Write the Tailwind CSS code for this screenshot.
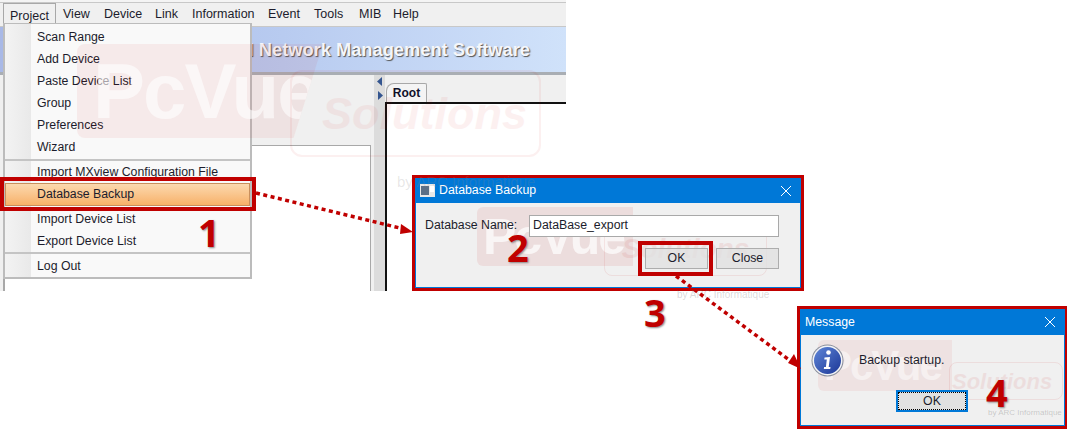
<!DOCTYPE html>
<html lang="en">
<head>
    <meta charset="UTF-8">
    <title>Database Backup</title>
    <script src="https://cdn.jsdelivr.net/npm/@tailwindcss/browser@4"></script>
</head>
<body class="bg-white">
<div class="relative w-[1067px] h-[446px] overflow-hidden bg-white font-['Liberation_Sans',sans-serif] text-[12.3px] text-[#1c1c2c]">

    <!-- application window -->
    <div class="absolute left-0 top-0 w-[566px] h-[291px] flex flex-col bg-[#f0f0f0]">
        <div class="h-[3px] bg-[#f4f4f4] border-b border-[#c8c8c8]"></div>
        <div class="h-[24px] flex items-center border-b border-[#c8c8c8] pl-[10px] text-[12.5px]">
            <span class="w-[53px]">Project</span>
            <span class="w-[41px]">View</span>
            <span class="w-[51px]">Device</span>
            <span class="w-[37px]">Link</span>
            <span class="w-[76px]">Information</span>
            <span class="w-[46px]">Event</span>
            <span class="w-[45px]">Tools</span>
            <span class="w-[34px]">MIB</span>
            <span>Help</span>
        </div>
        <div class="h-[45px] flex items-center justify-end pr-[36px] bg-gradient-to-r from-[#a8b8e6] via-[#b8cbf0] to-[#d0e2fa] text-[18.300px] font-bold text-[#f4f6fb] [text-shadow:1px_1px_1px_#555]">Industrial Network Management Software</div>
        <div class="flex-1 flex border-t-[3px] border-[#a9aeb4] bg-white">
            <div class="w-[374px] pt-[70px] pl-[3px] bg-[#f0f0f0]">
                <div class="h-full w-[368px] bg-white border-l-2 border-t border-r border-[#a8a8a8]"></div>
            </div>
            <div class="w-[11px] flex flex-col items-center gap-[5px] pt-[2px] bg-[#dcdcdc]">
                <svg width="6" height="9" viewBox="0 0 6 9"><path d="M5 0v9L0 4.500z" fill="#34558f"/></svg>
                <svg width="6" height="9" viewBox="0 0 6 9"><path d="M1 0v9l5-4.500z" fill="#34558f"/></svg>
            </div>
            <div class="flex-1 flex flex-col bg-[#f0f0f0]">
                <div class="h-[27px] flex items-end pl-[1px]">
                    <div class="w-[41px] h-[19px] flex items-center justify-center bg-[#f4f4f4] border border-b-0 border-[#a8a8a8] rounded-tl-[8px] rounded-tr-[2px] font-bold text-[12px] text-[#10102a]">Root</div>
                </div>
                <div class="flex-1 bg-white border-l-2 border-t-2 border-[#111]"></div>
            </div>
        </div>
    </div>

    <!-- project menu -->
    <div class="absolute left-[3px] top-[3px] w-[53px] h-[21px] border border-b-0 border-[#a8a8a8] bg-[#f0f0f0]"></div>
    <div class="absolute left-[10px] top-[7px] text-[12.5px]">Project</div>
    <div class="absolute left-[3px] top-[23px] w-[249px] h-[256px] flex flex-col bg-[#f9f9f9] border-2 border-t-1 border-[#bcbcbc]">
        <div class="absolute left-0 top-0 bottom-0 w-[26px] bg-gradient-to-r from-[#f3f3f3] to-[#e9e9e9]"></div>
        <div class="relative flex flex-col pt-[2px]">
            <div class="h-[22px] flex items-center pl-[32px]">Scan Range</div>
            <div class="h-[22px] flex items-center pl-[32px]">Add Device</div>
            <div class="h-[22px] flex items-center pl-[32px]">Paste Device List</div>
            <div class="h-[22px] flex items-center pl-[32px]">Group</div>
            <div class="h-[22px] flex items-center pl-[32px]">Preferences</div>
            <div class="h-[22px] flex items-center pl-[32px]">Wizard</div>
            <div class="h-[2px] mt-[1px] mb-[1px] bg-[#c4c4c4]"></div>
            <div class="h-[21px] flex items-center pl-[32px]">Import MXview Configuration File</div>
            <div class="h-[23px] flex items-center pl-[31px] bg-gradient-to-b from-[#fbd9ae] to-[#f7b169] border border-[#c98f5c]">Database Backup</div>
            <div class="h-[22px] mt-[2px] flex items-center pl-[32px]">Import Device List</div>
            <div class="h-[22px] flex items-center pl-[32px]">Export Device List</div>
            <div class="h-[2px] bg-[#c4c4c4]"></div>
            <div class="h-[22px] mt-[1px] flex items-center pl-[32px]">Log Out</div>
        </div>
    </div>

    <!-- watermark over the application -->
    <div class="absolute left-[77px] top-[44px] w-[246px] h-[94px] flex items-center pl-[16px] bg-[#c00000]/[0.06] rounded-l-[8px] [clip-path:polygon(0_0,100%_0,88%_100%,0_100%)] text-[78px] font-bold leading-none tracking-[-2px] text-white/60">PcVue</div>
    <div class="absolute left-[290px] top-[70px] w-[251px] h-[87px] flex items-center pl-[30px] border-2 border-[#c00000]/[0.06] rounded-[12px] text-[45px] font-bold italic text-[#c00000]/[0.06]">Solutions</div>

    <!-- database backup dialog -->
    <div class="absolute left-[412px] top-[175px] w-[392px] h-[116px] flex flex-col border-[3px] border-[#c00000] bg-[#f0f0f0]">
        <div class="h-[25px] flex items-center bg-[#0078d7] pl-[5px] pr-[6px] text-white">
            <svg width="15" height="13" viewBox="0 0 15 13" class="mr-[4px]"><rect width="15" height="13" fill="#e8e8e8"/><rect x="1" y="2" width="8" height="9" fill="#5c6f86"/><rect x="10" y="2" width="4" height="6" fill="#fff"/></svg>
            <span>Database Backup</span>
            <svg width="12" height="12" viewBox="0 0 12 12" class="ml-auto mr-[3px]"><path d="M1 1l10 10M11 1L1 11" stroke="#fff" stroke-width="1"/></svg>
        </div>
        <div class="flex-1 relative flex flex-col border-x border-b border-[#0078d7] pl-[9px] pr-[21px] pt-[11px]">
            <div class="absolute left-[61px] top-[4px] w-[156px] h-[59px] bg-[#c00000]/[0.08] rounded-l-[6px] pl-[6px] flex items-center text-[50px] font-bold leading-none tracking-[-2px] text-white/70">PcVue</div>
            <div class="absolute left-[188px] top-[19px] w-[163px] h-[54px] flex items-center justify-center border border-[#c00000]/[0.08] rounded-[8px] text-[28px] font-bold italic text-[#c00000]/[0.08]">Solutions</div>
            <div class="relative flex items-center h-[23px]">
                <span class="w-[104px]">Database Name:</span>
                <div class="flex-1 h-[22px] flex items-center pl-[3px] bg-white border border-[#a9a9a9]">DataBase_export</div>
            </div>
            <div class="relative flex justify-end gap-[8px] mt-[11px]">
                <div class="w-[63px] h-[21px] flex items-center justify-center bg-[#e1e1e1]/80 border border-[#adadad]">OK</div>
                <div class="w-[63px] h-[21px] flex items-center justify-center bg-[#e1e1e1]/80 border border-[#adadad]">Close</div>
            </div>
        </div>
    </div>
    <div class="absolute left-[397px] top-[171px] whitespace-nowrap text-[15px] text-[#888]/20">by ARC Informatique</div>
    <div class="absolute left-[677px] top-[287px] whitespace-nowrap text-[10px] text-[#666]/25">by ARC Informatique</div>

    <!-- message dialog -->
    <div class="absolute left-[797px] top-[306px] w-[271px] h-[123px] flex flex-col border-[3px] border-[#c00000] bg-[#f0f0f0]">
        <div class="h-[26px] flex items-center bg-[#0078d7] pl-[5px] pr-[6px] text-white">
            <span>Message</span>
            <svg width="12" height="12" viewBox="0 0 12 12" class="ml-auto mr-[3px]"><path d="M1 1l10 10M11 1L1 11" stroke="#fff" stroke-width="1"/></svg>
        </div>
        <div class="flex-1 relative flex flex-col border-x border-b border-[#0078d7] overflow-hidden">
            <div class="absolute left-[17px] top-[5px] w-[134px] h-[51px] bg-[#c00000]/[0.06] rounded-l-[6px] flex items-center pl-[6px] text-[42px] font-bold leading-none tracking-[-2px] text-white/50">PcVue</div>
            <div class="absolute left-[148px] top-[27px] w-[114px] h-[38px] flex items-center pl-[2px] border border-[#c00000]/[0.08] rounded-[8px] text-[22px] font-bold italic text-[#c00000]/[0.08]">Solutions</div>
            <div class="relative flex items-center pl-[10px] pt-[9px] gap-[15px]">
                <svg width="33" height="33" viewBox="0 0 33 33">
                    <defs><linearGradient id="infoFill" x1="0" y1="0" x2="1" y2="1"><stop offset="0" stop-color="#5f86d8"/><stop offset="1" stop-color="#1c3796"/></linearGradient></defs>
                    <circle cx="16.500" cy="16.500" r="16" fill="#8a8f9c"/>
                    <circle cx="16.500" cy="16.500" r="15" fill="#f2f3f6"/>
                    <circle cx="16.500" cy="16.500" r="13.500" fill="url(#infoFill)"/>
                    <circle cx="17.500" cy="8.500" r="2.300" fill="#fff"/>
                    <path d="M13.500 13.500l5.500-.5-1.300 10h1.800l-.3 2h-6.400l.3-2h1.800l.9-7.500h-2.500z" fill="#fff"/>
                </svg>
                <span>Backup startup.</span>
            </div>
            <div class="relative flex pl-[95px] mt-[13px]">
                <div class="w-[72px] h-[22px] flex items-center justify-center bg-[#e1e1e1] border-2 border-[#0078d7] outline-1 outline-dotted outline-offset-[-3px] outline-black">OK</div>
            </div>
            <div class="absolute left-[187px] top-[72px] whitespace-nowrap text-[8px] text-[#666]/30">by ARC Informatique</div>
        </div>
    </div>

    <!-- callouts -->
    <div class="absolute left-0 top-[177px] w-[256px] h-[34px] border-[4px] border-[#c00000]"></div>
    <div class="absolute left-[638px] top-[241px] w-[75px] h-[35px] border-[4px] border-[#c00000]"></div>
    <svg class="absolute left-0 top-0" width="1067" height="446" viewBox="0 0 1067 446" fill="none">
        <path d="M256 193L404 229" stroke="#c00000" stroke-width="3.500" stroke-dasharray="4 3.500"/>
        <path d="M413 232L401 224L400 234z" fill="#c00000"/>
        <path d="M676 276L792 362" stroke="#c00000" stroke-width="3.500" stroke-dasharray="4 3.500"/>
        <path d="M801 369L788 363L794 354z" fill="#c00000"/>
    </svg>
    <span class="absolute left-[198px] top-[211px] text-[38px] leading-[42px] font-bold font-['Open_Sans',sans-serif] text-[#c00000] [text-shadow:1px_1px_2px_#888]">1</span>
    <span class="absolute left-[507px] top-[226px] text-[38px] leading-[42px] font-bold font-['Open_Sans',sans-serif] text-[#c00000] [text-shadow:1px_1px_2px_#888]">2</span>
    <span class="absolute left-[644px] top-[291px] text-[38px] leading-[42px] font-bold font-['Open_Sans',sans-serif] text-[#c00000] [text-shadow:1px_1px_2px_#888]">3</span>
    <span class="absolute left-[986px] top-[371px] text-[38px] leading-[42px] font-bold font-['Open_Sans',sans-serif] text-[#c00000] [text-shadow:1px_1px_2px_#888]">4</span>
</div>
</body>
</html>
